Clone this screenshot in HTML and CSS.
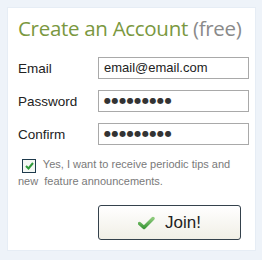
FILE: index.html
```html
<!DOCTYPE html>
<html>
<head>
<title>Create an Account</title>
<meta content="width=device-width, initial-scale=1" name="viewport" />
<link rel="stylesheet" href="styles.css">
</head>
<body>
<div class='card'>
  <h1 class='title'>Create an Account <span class='free'>(free)</span></h1>

  <div class='field'>
    <label class='lbl'>Email</label>
    <div class='inp'>email@email.com</div>
  </div>
  <div class='field'>
    <label class='lbl'>Password</label>
    <div class='inp dots'>&#9679;&#9679;&#9679;&#9679;&#9679;&#9679;&#9679;&#9679;&#9679;</div>
  </div>
  <div class='field'>
    <label class='lbl'>Confirm</label>
    <div class='inp dots'>&#9679;&#9679;&#9679;&#9679;&#9679;&#9679;&#9679;&#9679;&#9679;</div>
  </div>

  <p class='optin'>
    <span class='chk'>
      <svg width="9" height="8" viewBox="0 0 9 8"><path d="M1 4 L3.5 6.5 L8 1" fill="none" stroke="#2f9a3a" stroke-width="2"/></svg>
    </span>
    Yes, I want to receive periodic tips and new&nbsp; feature announcements.
  </p>

  <div class='actions'>
    <button class='join'>
      <svg width="17" height="14" viewBox="0 0 17 14">
        <defs>
          <linearGradient id="gchk" x1="0" y1="0" x2="0" y2="1">
            <stop offset="0" stop-color="#8cc97a"/>
            <stop offset="1" stop-color="#3f9a3a"/>
          </linearGradient>
        </defs>
        <path d="M1.5 7.5 L6 11.5 L15 2.5" fill="none" stroke="url(#gchk)" stroke-width="3.4" stroke-linecap="round" stroke-linejoin="round"/>
      </svg>
      <span>Join!</span>
    </button>
  </div>
</div>
</body>
</html>
```

FILE: styles.css
```css
*, body {
  margin: 0;
  padding: 0;
}
body {
  background: #eef3f9;
  padding: 7px 6px 9px 7px;
  font-family: "Liberation Sans", Arial, sans-serif;
}
.card {
  background: #fff;
  border: 1px solid #e6edf5;
  height: 244px;
  box-sizing: border-box;
  padding: 6px 4px 0 10px;
}
.title {
  font-family: "Open Sans", sans-serif;
  font-weight: normal;
  font-size: 20.5px;
  line-height: 28px;
  color: #7a9840;
  letter-spacing: -0.3px;
  white-space: nowrap;
  margin-bottom: 15px;
}
.free {
  color: #8a8a8a;
}
.field {
  display: flex;
  align-items: center;
  margin-bottom: 11px;
}
.lbl {
  width: 80px;
  font-size: 13.5px;
  color: #222;
}
.inp {
  width: 151px;
  height: 22px;
  box-sizing: border-box;
  border: 1px solid #a9a9a9;
  padding: 0 5px;
  font-size: 13px;
  line-height: 20px;
  color: #222;
}
.dots {
  font-family: "DejaVu Sans", sans-serif;
  font-size: 8px;
  letter-spacing: 0.6px;
  color: #333;
}
.optin {
  font-size: 11px;
  line-height: 16px;
  color: #7a7a7a;
  margin-top: 5px;
  width: 232px;
}
.chk {
  display: inline-flex;
  align-items: center;
  justify-content: center;
  width: 12px;
  height: 12px;
  border: 1px solid #1e3a4c;
  background: #f4f8f4;
  margin: 0 4px 0 4px;
  vertical-align: -2px;
}
.actions {
  display: flex;
  justify-content: flex-end;
  padding-right: 10px;
  margin-top: 16px;
}
.join {
  width: 143px;
  height: 35px;
  border: 1px solid #34414c;
  border-radius: 3px;
  background: linear-gradient(#ffffff, #f1efe6);
  display: flex;
  align-items: center;
  justify-content: center;
  gap: 10px;
  font-family: "Liberation Sans", Arial, sans-serif;
  font-size: 17px;
  color: #222;
}
```
